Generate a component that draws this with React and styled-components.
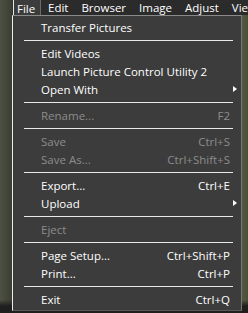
import React from 'react';
import styled, { createGlobalStyle } from 'styled-components';

const GlobalStyle = createGlobalStyle`
  html, body {
    margin: 0;
    padding: 0;
    background: #1f1f1f;
  }
  body {
    font-family: "Open Sans", "Noto Sans", "Liberation Sans", sans-serif;
    font-size: 11.5px;
  }
`;

const Screen = styled.div`
  width: 248px;
  height: 313px;
  overflow: hidden;
  display: flex;
  flex-direction: column;
  background:
    linear-gradient(180deg, rgba(31, 31, 31, 0) 0, rgba(31, 31, 31, 0) 300px, #1f1f1f 306px),
    linear-gradient(90deg, #4d5142 0, #3b3d33 12px, #2c2c2c 13px, #2c2c2c 240px, #54593f 242px, #4a5038 248px);
`;

const MenuBar = styled.div`
  display: flex;
  align-items: stretch;
  height: 15px;
  margin-left: 13px;
  overflow: hidden;
  background: #2b2b2b;
  color: #ffffff;
`;

const BarItem = styled.div`
  flex-shrink: 0;
  display: flex;
  align-items: center;
  padding: 0 6px 0 7px;
  line-height: 15px;
  white-space: nowrap;
  ${(p) =>
    p.$active &&
    `
    position: relative;
    z-index: 1;
    height: 16px;
    width: 28px;
    padding: 0 0 0 3px;
    box-sizing: border-box;
    background: #3c3c3c;
    border-left: 1px solid #e6e6e6;
    border-right: 1px solid #6a6a6a;
  `}
`;

const Menu = styled.div`
  margin-left: 12px;
  width: 230px;
  box-sizing: border-box;
  background: #3c3c3c;
  border-left: 1px solid #ececec;
  border-top: 1px solid #8a8a8a;
  border-right: 1px solid #777777;
  border-bottom: 1px solid #5a5a5a;
  padding: 2px 0 2px;
  color: #ffffff;
`;

const Item = styled.div`
  display: flex;
  align-items: center;
  height: 18px;
  padding: 0 10px 0 28px;
  color: ${(p) => (p.$disabled ? '#8c8c8c' : '#ffffff')};
  white-space: nowrap;
`;

const Label = styled.span`
  flex: 1;
`;

const Shortcut = styled.span`
  margin-right: 1px;
`;

const Arrow = styled.span`
  width: 0;
  height: 0;
  margin-right: -6px;
  border-top: 3.5px solid transparent;
  border-bottom: 3.5px solid transparent;
  border-left: 4px solid #ffffff;
`;

const Separator = styled.div`
  height: 8px;
  display: flex;
  align-items: center;
  padding: 0 8px 0 11px;
  &::after {
    content: '';
    flex: 1;
    height: 1px;
    background: #e8e8e8;
  }
`;

const groups = [
  [{ label: 'Transfer Pictures' }],
  [
    { label: 'Edit Videos' },
    { label: 'Launch Picture Control Utility 2' },
    { label: 'Open With', submenu: true },
  ],
  [{ label: 'Rename...', shortcut: 'F2', disabled: true }],
  [
    { label: 'Save', shortcut: 'Ctrl+S', disabled: true },
    { label: 'Save As...', shortcut: 'Ctrl+Shift+S', disabled: true },
  ],
  [
    { label: 'Export...', shortcut: 'Ctrl+E' },
    { label: 'Upload', submenu: true },
  ],
  [{ label: 'Eject', disabled: true }],
  [
    { label: 'Page Setup...', shortcut: 'Ctrl+Shift+P' },
    { label: 'Print...', shortcut: 'Ctrl+P' },
  ],
  [{ label: 'Exit', shortcut: 'Ctrl+Q' }],
];

const barItems = ['File', 'Edit', 'Browser', 'Image', 'Adjust', 'View'];

export default function App() {
  return (
    <>
      <GlobalStyle />
      <Screen>
        <MenuBar>
          {barItems.map((name, i) => (
            <BarItem key={name} $active={i === 0}>
              {name}
            </BarItem>
          ))}
        </MenuBar>
        <Menu>
          {groups.map((group, gi) => (
            <React.Fragment key={gi}>
              {gi > 0 && <Separator />}
              {group.map((item) => (
                <Item key={item.label} $disabled={item.disabled}>
                  <Label>{item.label}</Label>
                  {item.shortcut && <Shortcut>{item.shortcut}</Shortcut>}
                  {item.submenu && <Arrow />}
                </Item>
              ))}
            </React.Fragment>
          ))}
        </Menu>
      </Screen>
    </>
  );
}
